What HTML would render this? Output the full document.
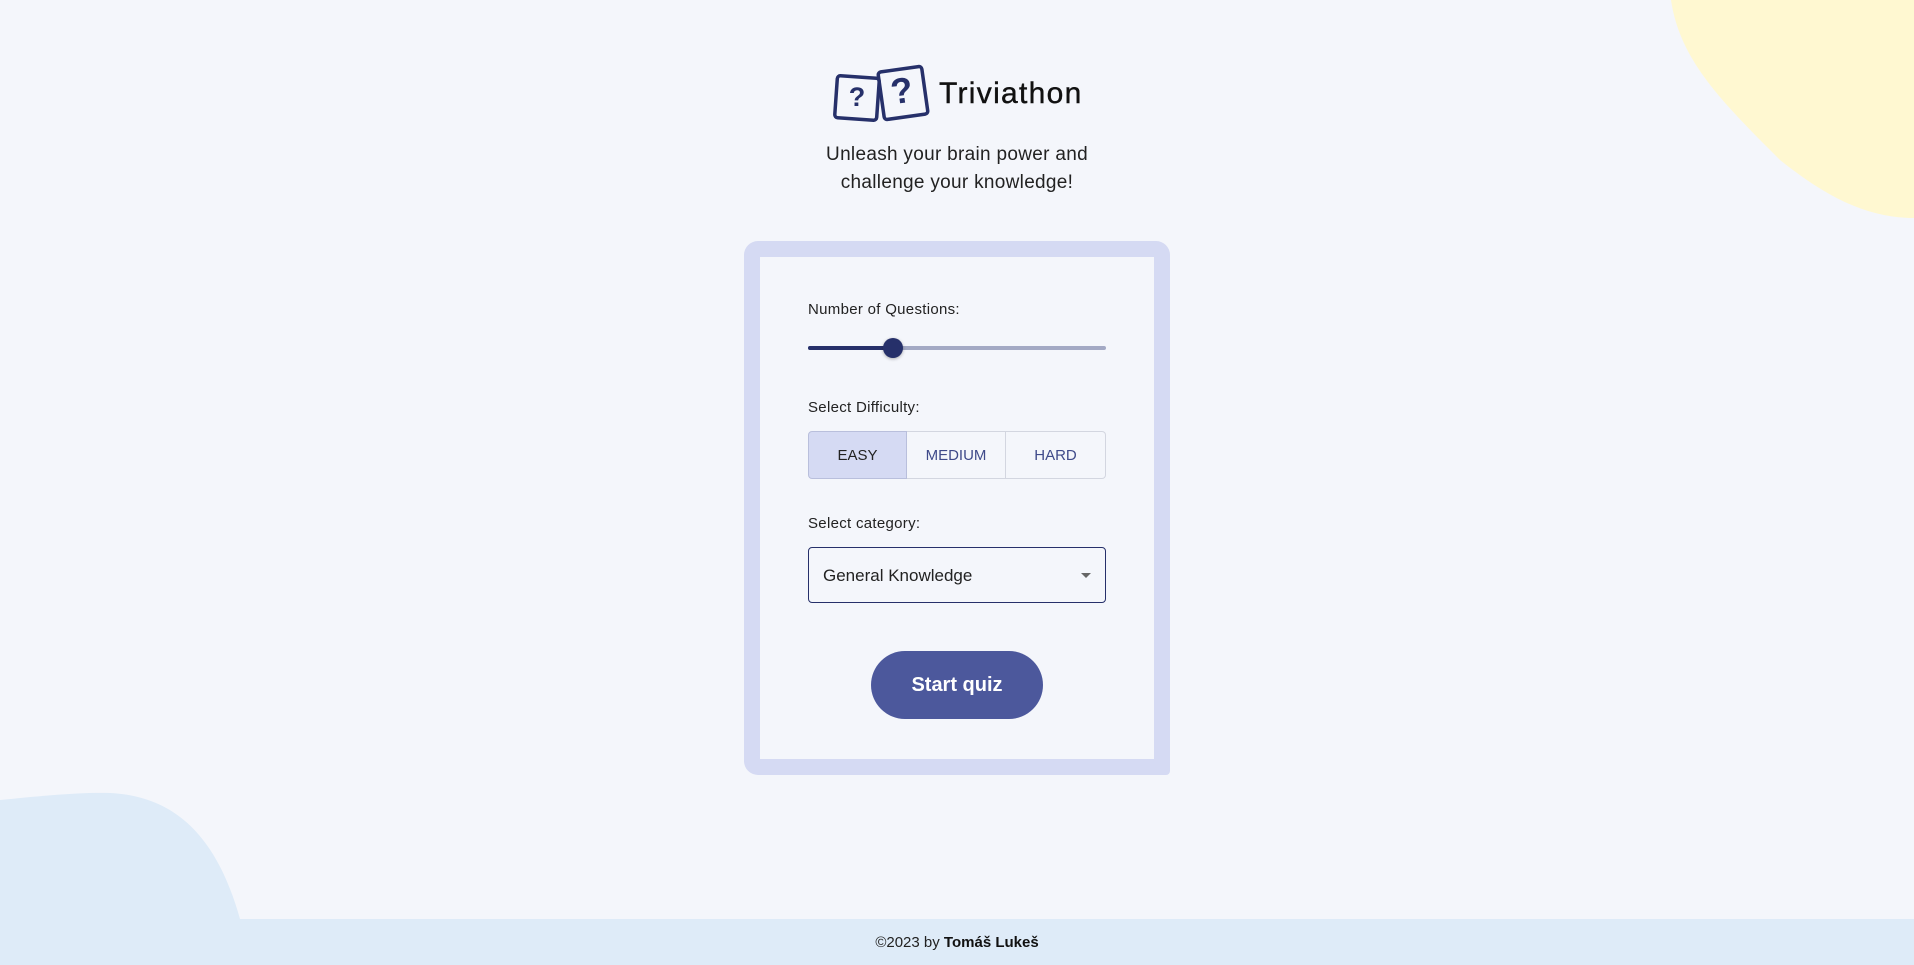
<!DOCTYPE html>
<html><head><meta charset="utf-8"><style>
*{box-sizing:border-box;margin:0;padding:0}
body{width:1914px;height:965px;background:#f4f6fb;font-family:"Liberation Sans",sans-serif;position:relative;overflow:hidden;color:#111}
.abs{position:absolute}
.lbl{position:absolute;left:808px;font-size:15px;color:#222;letter-spacing:.3px}
.btn{position:absolute;top:431px;height:48px;width:99px;display:flex;align-items:center;justify-content:center;font-size:15px;color:#3f4a8a;border:1px solid #d3d6e0;background:#f4f6fb}
</style></head><body>
<svg class="abs" style="left:0;top:0" width="1914" height="965">
<path d="M1671 0 C1680 60 1720 100 1780 160 C1830 200 1870 218 1914 218 L1914 0 Z" fill="#fff8d1"/>
<path d="M0 800 C40 796 80 792 110 793 C170 796 215 830 240 919 L0 919 Z" fill="#deebf8"/>
<rect x="0" y="919" width="1914" height="46" fill="#deebf8"/>
<g fill="none" stroke="#26306a" stroke-width="3.5" stroke-linejoin="round">
<rect x="836" y="77" width="42" height="42" rx="3" transform="rotate(4 857 98)"/>
<rect x="881" y="69" width="44" height="48" rx="3" transform="rotate(-8 903 93)"/>
</g>
<text x="857" y="106" font-family="Liberation Sans" font-weight="bold" font-size="27" fill="#26306a" text-anchor="middle">?</text>
<text x="902" y="103" font-family="Liberation Sans" font-weight="bold" font-size="36" fill="#26306a" text-anchor="middle" transform="rotate(-8 902 93)">?</text>
</svg>
<div class="abs" style="left:939px;top:77px;font-size:30px;letter-spacing:1.3px;color:#111;-webkit-text-stroke:0.4px #111">Triviathon</div>
<div class="abs" style="left:757px;width:400px;top:141px;text-align:center;font-size:19px;line-height:28px;color:#222;letter-spacing:.3px">Unleash your brain power and<br>challenge your knowledge!</div>
<div class="abs" style="left:744px;top:241px;width:426px;height:534px;border:16px solid #d5daf3;border-radius:14px 14px 4px 14px;background:#f4f6fb"></div>
<div class="lbl" style="top:301px">Number of Questions:</div>
<div class="abs" style="left:808px;top:346px;width:298px;height:4px;border-radius:2px;background:#a3a9c4"></div>
<div class="abs" style="left:808px;top:346px;width:85px;height:4px;border-radius:2px;background:#26306a"></div>
<div class="abs" style="left:883px;top:338px;width:20px;height:20px;border-radius:50%;background:#26306a;box-shadow:0 1px 3px rgba(0,0,0,.3)"></div>
<div class="lbl" style="top:399px">Select Difficulty:</div>
<div class="btn" style="left:808px;background:#d5daf3;color:#222;border-color:#b9bfdc;border-radius:4px 0 0 4px">EASY</div>
<div class="btn" style="left:907px;border-left:none">MEDIUM</div>
<div class="btn" style="left:1006px;width:100px;border-left:none;border-radius:0 4px 4px 0">HARD</div>
<div class="lbl" style="top:515px">Select category:</div>
<div class="abs" style="left:808px;top:547px;width:298px;height:56px;border:1.5px solid #26306a;border-radius:4px;font-size:17px;color:#222;padding:18px 0 0 14px">General Knowledge</div>
<div class="abs" style="left:1081px;top:573px;width:0;height:0;border-left:5px solid transparent;border-right:5px solid transparent;border-top:5px solid #666"></div>
<div class="abs" style="left:871px;top:651px;width:172px;height:68px;border-radius:34px;background:#4c589c;color:#fff;font-size:20px;font-weight:bold;display:flex;align-items:center;justify-content:center">Start quiz</div>
<div class="abs" style="left:0;width:1914px;top:934px;text-align:center;font-size:15px;color:#222">©2023 by <b style="color:#111">Tomáš Lukeš</b></div>
</body></html>
